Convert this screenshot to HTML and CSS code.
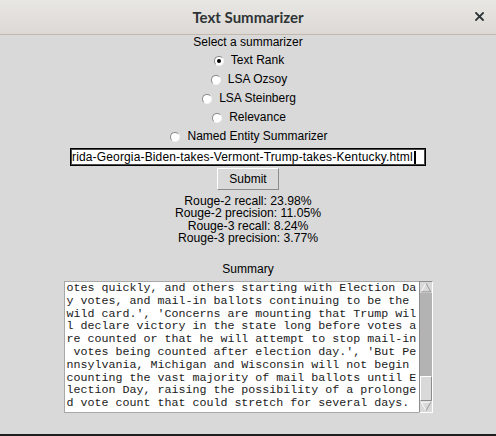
FILE: index.html
```html
<!DOCTYPE html>
<html>
<head>
<meta charset="utf-8">
<link rel="stylesheet" href="styles.css">
</head>
<body>
<div class="window">
  <header class="titlebar">
    <span class="title">Text Summarizer</span>
    <svg class="close" width="9" height="9" viewBox="0 0 9 9"><path d="M1 1 L8 8 M8 1 L1 8" stroke="#2e3436" stroke-width="1.8" stroke-linecap="square"/></svg>
  </header>
  <main class="content">
    <div class="label">Select a summarizer</div>
    <div class="radio"><span class="dot checked"></span><span>Text Rank</span></div>
    <div class="radio"><span class="dot"></span><span>LSA Ozsoy</span></div>
    <div class="radio"><span class="dot"></span><span>LSA Steinberg</span></div>
    <div class="radio"><span class="dot"></span><span>Relevance</span></div>
    <div class="radio"><span class="dot"></span><span>Named Entity Summarizer</span></div>
    <div class="entry"><span class="entry-text">rida-Georgia-Biden-takes-Vermont-Trump-takes-Kentucky.html</span><span class="caret"></span></div>
    <div class="button">Submit</div>
    <div class="scores">
      <div>Rouge-2 recall: 23.98%</div>
      <div>Rouge-2 precision: 11.05%</div>
      <div>Rouge-3 recall: 8.24%</div>
      <div>Rouge-3 precision: 3.77%</div>
    </div>
    <div class="label summary-label">Summary</div>
    <div class="textbox">
      <pre class="text">otes quickly, and others starting with Election Da
y votes, and mail-in ballots continuing to be the 
wild card.', 'Concerns are mounting that Trump wil
l declare victory in the state long before votes a
re counted or that he will attempt to stop mail-in
 votes being counted after election day.', 'But Pe
nnsylvania, Michigan and Wisconsin will not begin 
counting the vast majority of mail ballots until E
lection Day, raising the possibility of a prolonge
d vote count that could stretch for several days.</pre>
      <div class="scrollbar">
        <svg class="arrow" width="14" height="12" viewBox="0 0 14 12"><polygon points="7,1 1.5,11 12.5,11" fill="#d9d9d9"/><path d="M1.5 11 L7 1" stroke="#ffffff" stroke-width="1"/><path d="M7 1 L12.5 11 L1.5 11" stroke="#8c8c8c" stroke-width="1" fill="none"/></svg>
        <div class="trough"><div class="slider"></div></div>
        <svg class="arrow" width="14" height="12" viewBox="0 0 14 12"><polygon points="1.5,1 12.5,1 7,11" fill="#d9d9d9"/><path d="M7 11 L1.5 1 L12.5 1" stroke="#ffffff" stroke-width="1" fill="none"/><path d="M12.5 1 L7 11" stroke="#8c8c8c" stroke-width="1"/></svg>
      </div>
    </div>
  </main>
  <div class="taskbar"></div>
</div>
</body>
</html>
```

FILE: styles.css
```css
html, body {
  margin: 0;
  padding: 0;
}
body {
  width: 496px;
  height: 436px;
  overflow: hidden;
  background: #d9d9d9;
  font-family: "Liberation Sans", Arial, sans-serif;
  font-size: 12px;
  color: #000;
}
.window {
  display: flex;
  flex-direction: column;
  height: 436px;
}
.titlebar {
  position: relative;
  height: 34px;
  border-bottom: 1px solid #c2b8ae;
  background: linear-gradient(#e9e7e4, #dcd9d5);
  display: flex;
  align-items: center;
  justify-content: center;
  flex: none;
}
.title {
  font-family: Lato, "Noto Sans", sans-serif;
  font-weight: 700;
  font-size: 15px;
  color: #2e3436;
}
.close {
  position: absolute;
  right: 12px;
  top: 12px;
}
.content {
  flex: 1;
  display: flex;
  flex-direction: column;
  align-items: center;
}
.label {
  line-height: 15px;
}
.radio {
  height: 19px;
  display: flex;
  align-items: center;
  padding-left: 2px;
}
.dot {
  width: 10px;
  height: 10px;
  box-sizing: border-box;
  border-radius: 50%;
  background: #fff;
  border: 1px solid;
  border-color: #8a8a8a #f4f4f4 #f4f4f4 #8a8a8a;
  margin-right: 7px;
  margin-top: 2px;
  display: flex;
  align-items: center;
  justify-content: center;
}
.dot.checked::after {
  content: "";
  width: 4px;
  height: 4px;
  border-radius: 50%;
  background: #000;
}
.entry {
  margin-top: 3px;
  width: 356px;
  height: 18px;
  box-sizing: border-box;
  border: 1px solid #000;
  box-shadow: inset 0 0 0 1px #4a4a4a;
  background: #fff;
  display: flex;
  align-items: center;
  padding-left: 1px;
  overflow: hidden;
  white-space: nowrap;
  letter-spacing: 0.15px;
}
.caret {
  width: 2px;
  height: 13px;
  background: #000;
  margin-left: 1px;
}
.button {
  margin-top: 2px;
  width: 62px;
  height: 22px;
  box-sizing: border-box;
  border: 1px solid;
  border-color: #ffffff #8c8c8c #8c8c8c #ffffff;
  background: #d9d9d9;
  display: flex;
  align-items: center;
  justify-content: center;
}
.scores {
  margin-top: 4.5px;
  line-height: 12.5px;
  font-size: 12.2px;
  text-align: center;
}
.summary-label {
  margin-top: 17.5px;
}
.textbox {
  margin-top: 4px;
  display: flex;
  height: 132px;
}
.text {
  margin: 0;
  width: 355px;
  height: 132px;
  box-sizing: border-box;
  border: 1px solid #a8a8a8;
  border-right: none;
  background: #fff;
  padding: 0 0 0 2px;
  font-family: "Liberation Mono", "Courier New", monospace;
  font-size: 11.67px;
  line-height: 12.8px;
  color: #1a1a1a;
  white-space: pre;
  overflow: hidden;
}
.scrollbar {
  width: 14px;
  height: 132px;
  box-sizing: border-box;
  border: 1px solid;
  border-color: #8c8c8c #ffffff #ffffff #8c8c8c;
  background: #d9d9d9;
  display: flex;
  flex-direction: column;
}
.arrow {
  display: block;
  width: 12px;
  height: 11px;
  flex: none;
}
.trough {
  flex: 1;
  background: #b3b3b3;
  display: flex;
  flex-direction: column;
  justify-content: flex-end;
}
.slider {
  height: 25px;
  box-sizing: border-box;
  border: 1px solid;
  border-color: #ffffff #8c8c8c #8c8c8c #ffffff;
  background: #d9d9d9;
}
.taskbar {
  height: 2px;
  background: #1e1e1e;
  flex: none;
}
```
